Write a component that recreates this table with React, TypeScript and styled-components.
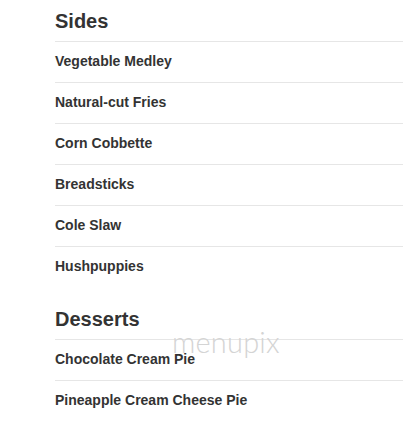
import React from "react";
import styled, { createGlobalStyle } from "styled-components";

const Global = createGlobalStyle`
  html, body { margin: 0; padding: 0; background: #fff; }
  body { font-family: "Liberation Sans", Arial, sans-serif; color: #333; }
`;

const Page = styled.div`
  position: relative;
  padding: 9px 0 0 55px;
`;

const Section = styled.section`
  & + & { margin-top: 20px; }
`;

const Heading = styled.h2`
  margin: 0;
  font-size: 20px;
  line-height: 24px;
  font-weight: bold;
  color: #333;
  padding-bottom: 8px;
  border-bottom: 1px solid #e6e6e6;
`;

const List = styled.ul`
  list-style: none;
  margin: 0;
  padding: 0;
`;

const Item = styled.li`
  height: 38px;
  padding-bottom: 2px;
  display: flex;
  align-items: center;
  font-size: 14px;
  font-weight: bold;
  color: #333;
  border-bottom: 1px solid #e6e6e6;
  &:last-child { border-bottom: none; }
`;

const Watermark = styled.div`
  position: absolute;
  left: 172px;
  top: 324px;
  font-family: Lato, "Open Sans", sans-serif;
  font-weight: 300;
  font-size: 29px;
  letter-spacing: 0.2px;
  color: #d4d4d4;
  pointer-events: none;
`;

const menu = [
  { title: "Sides", items: ["Vegetable Medley", "Natural-cut Fries", "Corn Cobbette", "Breadsticks", "Cole Slaw", "Hushpuppies"] },
  { title: "Desserts", items: ["Chocolate Cream Pie", "Pineapple Cream Cheese Pie"] },
];

export default function App() {
  return (
    <Page>
      <Global />
      {menu.map((s) => (
        <Section key={s.title}>
          <Heading>{s.title}</Heading>
          <List>
            {s.items.map((i) => (
              <Item key={i}>{i}</Item>
            ))}
          </List>
        </Section>
      ))}
      <Watermark>menupix</Watermark>
    </Page>
  );
}
